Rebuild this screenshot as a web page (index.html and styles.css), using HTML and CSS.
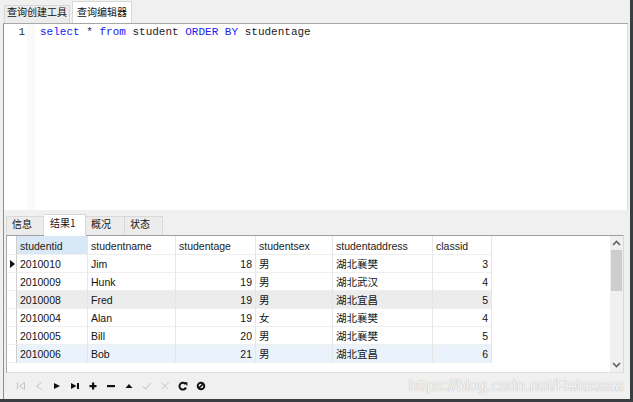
FILE: index.html
```html
<!DOCTYPE html>
<html>
<head>
<meta charset="utf-8">
<link rel="stylesheet" href="styles.css">
</head>
<body>
<div class="window">
  <div class="app">
    <div class="top-tabs">
      <div class="ttab">查询创建工具</div>
      <div class="ttab active">查询编辑器</div>
    </div>
    <div class="main">
      <div class="editor">
        <div class="gutter">1</div>
        <div class="fold"></div>
        <div class="code"><span class="kw">select</span> <span class="op">*</span> <span class="kw">from</span> student <span class="kw">ORDER BY</span> studentage</div>
      </div>
      <div class="lower">
        <div class="rtabs">
          <div class="rtab w38">信息</div>
          <div class="rtab active w42">结果1</div>
          <div class="rtab w39">概况</div>
          <div class="rtab w38">状态</div>
        </div>
        <div class="panel">
          <div class="grid-area">
            <div class="grid">
              <div class="c ind hd"></div>
              <div class="c h hd sel">studentid</div>
              <div class="c h hd">studentname</div>
              <div class="c h hd">studentage</div>
              <div class="c h hd">studentsex</div>
              <div class="c h hd">studentaddress</div>
              <div class="c h hd">classid</div>

              <div class="c ind"><span class="cur"></span></div>
              <div class="c">2010010</div><div class="c">Jim</div><div class="c r">18</div><div class="c">男</div><div class="c">湖北襄樊</div><div class="c r">3</div>

              <div class="c ind"></div>
              <div class="c">2010009</div><div class="c">Hunk</div><div class="c r">19</div><div class="c">男</div><div class="c">湖北武汉</div><div class="c r">4</div>

              <div class="c ind"></div>
              <div class="c gray">2010008</div><div class="c gray">Fred</div><div class="c r gray">19</div><div class="c gray">男</div><div class="c gray">湖北宜昌</div><div class="c r gray">5</div>

              <div class="c ind"></div>
              <div class="c">2010004</div><div class="c">Alan</div><div class="c r">19</div><div class="c">女</div><div class="c">湖北襄樊</div><div class="c r">4</div>

              <div class="c ind"></div>
              <div class="c">2010005</div><div class="c">Bill</div><div class="c r">20</div><div class="c">男</div><div class="c">湖北襄樊</div><div class="c r">5</div>

              <div class="c ind"></div>
              <div class="c blue">2010006</div><div class="c blue">Bob</div><div class="c r blue">21</div><div class="c blue">男</div><div class="c blue">湖北宜昌</div><div class="c r blue">6</div>
            </div>
          </div>
          <div class="scrollbar">
            <div class="sb-btn"><svg width="9" height="6" viewBox="0 0 9 6"><path d="M1 5 L4.5 1.5 L8 5" fill="none" stroke="#606060" stroke-width="1.6"/></svg></div>
            <div class="sb-thumb"></div>
            <div class="sb-track"></div>
            <div class="sb-btn"><svg width="9" height="6" viewBox="0 0 9 6"><path d="M1 1 L4.5 4.5 L8 1" fill="none" stroke="#606060" stroke-width="1.6"/></svg></div>
          </div>
        </div>
        <div class="toolbar">
          <span class="ic"><svg width="10" height="10" viewBox="0 0 10 10"><path d="M1.5 1.5 V8.5" stroke="#c4c4c4" stroke-width="1"/><path d="M8.5 1.5 L3.5 5 L8.5 8.5 Z" fill="none" stroke="#c4c4c4" stroke-width="1"/></svg></span>
          <span class="ic"><svg width="10" height="10" viewBox="0 0 10 10"><path d="M7.5 1.5 L2.5 5 L7.5 8.5" fill="none" stroke="#c4c4c4" stroke-width="1"/></svg></span>
          <span class="ic"><svg width="10" height="10" viewBox="0 0 10 10"><path d="M2 2 L8 5 L2 8 Z" fill="#111"/></svg></span>
          <span class="ic"><svg width="10" height="10" viewBox="0 0 10 10"><path d="M1 2 L6.5 5 L1 8 Z" fill="#111"/><rect x="7" y="2" width="2" height="6" fill="#111"/></svg></span>
          <span class="ic"><svg width="10" height="10" viewBox="0 0 10 10"><rect x="4" y="1.5" width="2.2" height="7" fill="#111"/><rect x="1.5" y="4" width="7" height="2.2" fill="#111"/></svg></span>
          <span class="ic"><svg width="10" height="10" viewBox="0 0 10 10"><rect x="1" y="4" width="8" height="2.2" fill="#111"/></svg></span>
          <span class="ic"><svg width="10" height="10" viewBox="0 0 10 10"><path d="M1.5 7 L5 3 L8.5 7 Z" fill="#111"/></svg></span>
          <span class="ic"><svg width="10" height="10" viewBox="0 0 10 10"><path d="M1 5.5 L3.5 8 L9 2" fill="none" stroke="#d0d0d0" stroke-width="1.2"/></svg></span>
          <span class="ic"><svg width="10" height="10" viewBox="0 0 10 10"><path d="M1.5 1.5 L8.5 8.5 M8.5 1.5 L1.5 8.5" fill="none" stroke="#c8c8c8" stroke-width="1.2" stroke-dasharray="1.5 1"/></svg></span>
          <span class="ic"><svg width="10" height="10" viewBox="0 0 10 10"><path d="M7.6 3.2 A3.4 3.4 0 1 0 8 6.5" fill="none" stroke="#111" stroke-width="2"/><path d="M5.6 1.2 L9.4 1.2 L9.4 5 Z" fill="#111"/></svg></span>
          <span class="ic"><svg width="10" height="10" viewBox="0 0 10 10"><circle cx="5" cy="5" r="3.3" fill="none" stroke="#111" stroke-width="1.9"/><path d="M7.5 2.5 L2.5 7.5" stroke="#111" stroke-width="1.7"/></svg></span>
          <span class="watermark">https://blog.csdn.net/Relaxaaa</span>
        </div>
      </div>
    </div>
  </div>
</div>
</body>
</html>
```

FILE: styles.css
```css
* { box-sizing: border-box; }
html, body { margin: 0; padding: 0; }
body {
  background: #3a3d41;
  font-family: "Liberation Sans", "Noto Sans CJK SC", sans-serif;
  color: #1a1a1a;
}
.window {
  width: 633px;
  height: 402px;
  background: #3a3d41;
}
.app {
  width: 630px;
  height: 399px;
  background: #f0f0f0;
  display: flex;
  flex-direction: column;
}

/* top tabs */
.top-tabs {
  height: 23px;
  display: flex;
  align-items: flex-end;
  padding-left: 4px;
  gap: 2px;
  font-family: "Noto Sans CJK SC", sans-serif;
}
.ttab {
  height: 18px;
  padding: 0 2px;
  font-size: 10px;
  line-height: 12px;
  border: 1px solid #d6d6d6;
  border-bottom: none;
  background: #ececec;
  color: #111;
}
.ttab.active {
  height: 22px;
  padding: 0 4px;
  line-height: 20px;
  background: #ffffff;
  border-color: #d9d9d9;
}

/* main frame */
.main {
  flex: 1;
  margin-left: 3px;
  margin-right: 2px;
  border-left: 1px solid #8e8e8e;
  border-top: 1px solid #a8a8a8;
  display: flex;
  flex-direction: column;
  min-height: 0;
}
.editor {
  height: 186px;
  background: #ffffff;
  border-right: 1px solid #dedede;
  display: flex;
}
.gutter {
  width: 23px;
  padding-top: 1px;
  padding-right: 2px;
  text-align: right;
  font-family: "Liberation Mono", monospace;
  font-size: 11px;
  line-height: 14px;
  color: #303030;
}
.fold {
  width: 8px;
  background: #fafafa;
}
.code {
  padding-left: 5px;
  padding-top: 1px;
  font-family: "Liberation Mono", monospace;
  font-size: 11px;
  line-height: 14px;
  color: #1c1c1c;
  white-space: pre;
}
.kw { color: #2020f4; }
.op { color: #20206a; }

/* lower part */
.lower {
  flex: 1;
  display: flex;
  flex-direction: column;
  min-height: 0;
}
.rtabs {
  height: 25px;
  display: flex;
  align-items: flex-end;
  padding-left: 2px;
  font-family: "Noto Sans CJK SC", sans-serif;
}
.rtab {
  height: 19px;
  padding-left: 5px;
  padding-top: 1px;
  font-size: 10px;
  line-height: 11px;
  border: 1px solid #d8d8d8;
  border-bottom: none;
  border-left: none;
  background: #ececec;
  color: #111;
}
.rtab:first-child { border-left: 1px solid #d8d8d8; }
.rtab.active {
  height: 22px;
  padding-left: 6px;
  padding-top: 2px;
  background: #ffffff;
  margin-bottom: -1px;
  position: relative;
  z-index: 1;
}
.w38 { width: 38px; }
.w39 { width: 39px; }
.w42 { width: 42px; }

.panel {
  height: 138px;
  margin-left: 2px;
  margin-right: 4px;
  border-top: 1px solid #a0a0a0;
  border-left: 1px solid #a8a8a8;
  border-right: 1px solid #d8d8d8;
  border-bottom: 1px solid #e2e2e2;
  background: #ffffff;
  display: flex;
}
.grid-area {
  flex: 1;
  background: #ffffff;
}
.grid {
  display: grid;
  grid-template-columns: 10px 71px 88px 80px 77px 100px 59px;
  grid-template-rows: 19px;
  grid-auto-rows: 18px;
  font-size: 10.5px;
}
.c {
  border-right: 1px solid #e6e6e6;
  border-bottom: 1px solid #efefef;
  padding: 2px 3px 0;
  line-height: 15px;
  white-space: nowrap;
  overflow: hidden;
  color: #141414;
}
.c.hd { padding-top: 2px; line-height: 16px; }
.c.r { text-align: right; }
.c.h { color: #222; }
.c.sel { background: #d9e8f6; }
.c.gray { background: #ececec; }
.c.blue { background: #eaf3fc; }
.c.ind {
  padding: 0;
  border-right: 1px solid #cfcfcf;
  display: flex;
  align-items: center;
  justify-content: center;
}
.cur {
  width: 0;
  height: 0;
  border-top: 4px solid transparent;
  border-bottom: 4px solid transparent;
  border-left: 5px solid #111;
  margin-left: 1px;
}

.scrollbar {
  width: 13px;
  background: #f0f0f0;
  display: flex;
  flex-direction: column;
}
.sb-btn {
  height: 14px;
  display: flex;
  align-items: center;
  justify-content: center;
}
.sb-thumb {
  height: 41px;
  margin: 0 1px;
  background: #cdcdcd;
}
.sb-track { flex: 1; }

/* toolbar */
.toolbar {
  flex: 1;
  display: flex;
  align-items: center;
  padding-left: 8px;
  padding-right: 4px;
}
.ic {
  width: 18px;
  height: 10px;
  display: flex;
  justify-content: center;
}
.ic svg { display: block; }
.watermark {
  margin-left: auto;
  font-family: "Liberation Sans", sans-serif;
  font-size: 16px;
  line-height: 16px;
  color: #f6f6f6;
  text-shadow: 0 0 1px #9c9c9c;
  white-space: nowrap;
}
```
